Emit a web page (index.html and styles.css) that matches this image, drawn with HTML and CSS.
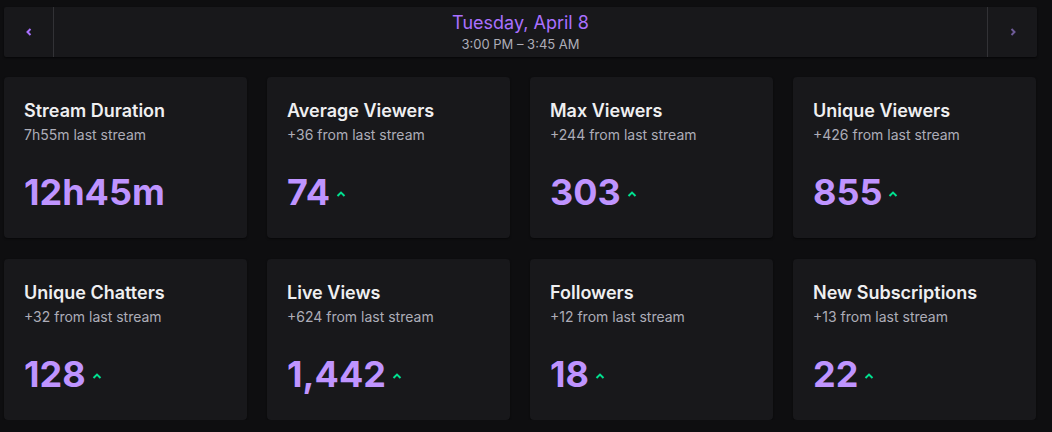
FILE: index.html
```html
<!DOCTYPE html>
<html lang="en">
<head>
<meta charset="utf-8">
<title>Stream Summary</title>
<link rel="stylesheet" href="styles.css">
</head>
<body>
<div class="page">
  <header class="datebar">
    <button class="nav nav-prev" aria-label="Previous stream">
      <svg width="6" height="8" viewBox="0 0 6 8"><path d="M4.5 1 L1.5 4 L4.5 7" fill="none" stroke="currentColor" stroke-width="2"/></svg>
    </button>
    <div class="date">
      <div class="date-title">Tuesday, April 8</div>
      <div class="date-time">3:00 PM – 3:45 AM</div>
    </div>
    <button class="nav nav-next" aria-label="Next stream">
      <svg width="6" height="8" viewBox="0 0 6 8"><path d="M1.5 1 L4.5 4 L1.5 7" fill="none" stroke="currentColor" stroke-width="2"/></svg>
    </button>
  </header>

  <section class="grid">
    <div class="card">
      <div class="card-title">Stream Duration</div>
      <div class="card-sub">7h55m last stream</div>
      <div class="card-value">12h45m</div>
    </div>
    <div class="card">
      <div class="card-title">Average Viewers</div>
      <div class="card-sub">+36 from last stream</div>
      <div class="card-value">74<svg class="up" width="10" height="6" viewBox="0 0 10 6"><path d="M1.5 5 L5 1.6 L8.5 5" fill="none" stroke="currentColor" stroke-width="2"/></svg></div>
    </div>
    <div class="card">
      <div class="card-title">Max Viewers</div>
      <div class="card-sub">+244 from last stream</div>
      <div class="card-value">303<svg class="up" width="10" height="6" viewBox="0 0 10 6"><path d="M1.5 5 L5 1.6 L8.5 5" fill="none" stroke="currentColor" stroke-width="2"/></svg></div>
    </div>
    <div class="card">
      <div class="card-title">Unique Viewers</div>
      <div class="card-sub">+426 from last stream</div>
      <div class="card-value">855<svg class="up" width="10" height="6" viewBox="0 0 10 6"><path d="M1.5 5 L5 1.6 L8.5 5" fill="none" stroke="currentColor" stroke-width="2"/></svg></div>
    </div>
    <div class="card">
      <div class="card-title">Unique Chatters</div>
      <div class="card-sub">+32 from last stream</div>
      <div class="card-value">128<svg class="up" width="10" height="6" viewBox="0 0 10 6"><path d="M1.5 5 L5 1.6 L8.5 5" fill="none" stroke="currentColor" stroke-width="2"/></svg></div>
    </div>
    <div class="card">
      <div class="card-title">Live Views</div>
      <div class="card-sub">+624 from last stream</div>
      <div class="card-value">1,442<svg class="up" width="10" height="6" viewBox="0 0 10 6"><path d="M1.5 5 L5 1.6 L8.5 5" fill="none" stroke="currentColor" stroke-width="2"/></svg></div>
    </div>
    <div class="card">
      <div class="card-title">Followers</div>
      <div class="card-sub">+12 from last stream</div>
      <div class="card-value">18<svg class="up" width="10" height="6" viewBox="0 0 10 6"><path d="M1.5 5 L5 1.6 L8.5 5" fill="none" stroke="currentColor" stroke-width="2"/></svg></div>
    </div>
    <div class="card">
      <div class="card-title">New Subscriptions</div>
      <div class="card-sub">+13 from last stream</div>
      <div class="card-value">22<svg class="up" width="10" height="6" viewBox="0 0 10 6"><path d="M1.5 5 L5 1.6 L8.5 5" fill="none" stroke="currentColor" stroke-width="2"/></svg></div>
    </div>
  </section>
</div>
</body>
</html>
```

FILE: styles.css
```css
* { box-sizing: border-box; }

html, body {
  margin: 0;
  padding: 0;
  background: #0e0e10;
  font-family: Inter, "Noto Sans", "Liberation Sans", sans-serif;
  color: #efeff1;
}

.page {
  width: 1033px;
  margin-left: 4px;
  padding-top: 7px;
}

.datebar {
  display: flex;
  align-items: stretch;
  height: 50px;
  background: #18181b;
  border-radius: 2px;
  box-shadow: 0 1px 2px rgba(0, 0, 0, 0.6);
}

.nav {
  width: 50px;
  flex: 0 0 50px;
  display: flex;
  align-items: center;
  justify-content: center;
  background: transparent;
  border: 0;
  padding: 0;
  cursor: pointer;
}

.nav-prev {
  color: #a970ff;
  border-right: 1px solid #323236;
}

.nav-next {
  color: #6e5b98;
  border-left: 1px solid #323236;
}

.date {
  flex: 1;
  display: flex;
  flex-direction: column;
  align-items: center;
  justify-content: center;
}

.date-title {
  font-size: 18px;
  line-height: 22px;
  color: #a970ff;
}

.date-time {
  font-size: 13px;
  line-height: 18px;
  color: #adadb8;
  margin-top: 1px;
}

.grid {
  display: grid;
  grid-template-columns: repeat(4, 243px);
  column-gap: 20px;
  row-gap: 21px;
  margin-top: 20px;
}

.card {
  height: 161px;
  background: #18181b;
  border-radius: 4px;
  padding: 22px 20px 0;
  box-shadow: 0 1px 2px rgba(0, 0, 0, 0.5);
}

.card-title {
  font-size: 18px;
  line-height: 24px;
  font-weight: 600;
  color: #efeff1;
}

.card-sub {
  font-size: 14px;
  line-height: 20px;
  color: #adadb8;
  margin-top: 2px;
}

.card-value {
  margin-top: 25px;
  font-size: 36px;
  line-height: 44px;
  font-weight: 700;
  color: #bf94ff;
  display: flex;
  align-items: center;
}

.up {
  color: #00e08f;
  margin-left: 6px;
  margin-top: 4px;
}
```
